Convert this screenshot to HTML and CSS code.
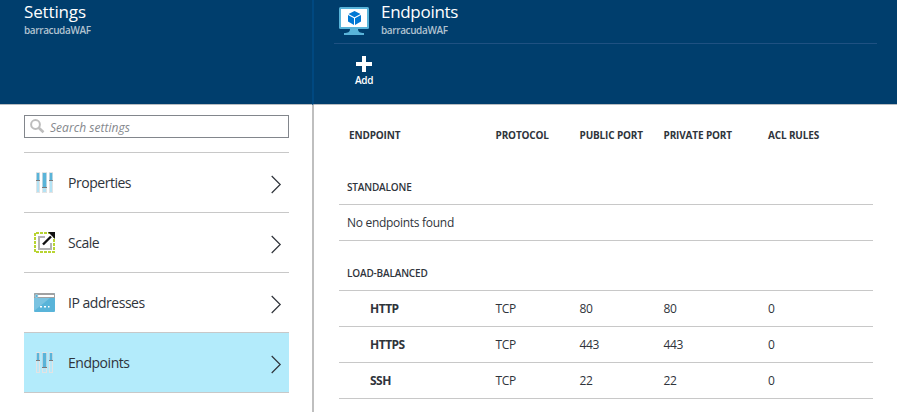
FILE: index.html
```html
<!DOCTYPE html>
<html lang="en">
<head>
<meta charset="utf-8">
<title>Endpoints</title>
<link rel="stylesheet" href="styles.css">
</head>
<body>
<svg class="defs" width="0" height="0" aria-hidden="true">
  <symbol id="sliders" viewBox="0 0 18 22">
    <path fill="#e3e3e3" d="M0 0h4v21H0zM6 0h5v21H6zM13 0h4v21h-4z"/>
    <path class="tube" d="M1 9h2v11H1zM7 16h3v4H7zM14 9h2v11h-2z"/>
    <path fill="#59b4d9" d="M.7 1h2.600v7H.7zM6.700 1h3.600v14H6.700zM13.700 1h2.600v7h-2.600z"/>
    <path fill="#7a7a7a" d="M0 8h4v1H0zM6 15h5v1H6zM13 8h4v1h-4z"/>
  </symbol>
  <symbol id="chevron" viewBox="0 0 11 19">
    <path fill="none" stroke="#2f343b" stroke-width="1.2" d="M.7 1L9.200 9.500.7 18"/>
  </symbol>
</svg>
<div class="app">
  <section class="settings">
    <header class="head">
      <h1 class="title">Settings</h1>
      <p class="sub">barracudaWAF</p>
    </header>
    <div class="content">
      <div class="search">
        <svg width="15" height="15" viewBox="0 0 15 15"><circle cx="5.5" cy="5.5" r="4.4" fill="none" stroke="#bdbdbd" stroke-width="2"/><path d="M8.7 8.7l4.8 4.6" stroke="#bdbdbd" stroke-width="2.6"/></svg>
        <span>Search settings</span>
      </div>
      <nav class="menu">
        <a class="item"><svg class="ico sliders" width="18" height="22"><use href="#sliders"/></svg><span>Properties</span><svg class="chev" width="11" height="19"><use href="#chevron"/></svg></a>
        <a class="item"><svg class="ico" width="22" height="22" viewBox="0 0 22 22"><rect x="1" y="1" width="19" height="19" fill="none" stroke="#b8d432" stroke-width="2" stroke-dasharray="3 1" stroke-dashoffset="-1"/><path d="M11 5H5v12h12v-6" fill="none" stroke="#b3b3b3" stroke-width="2"/><path d="M9 12.500L17 4.500" stroke="#111" stroke-width="2.400"/><path fill="#111" d="M14 0h7v7z"/></svg><span>Scale</span><svg class="chev" width="11" height="19"><use href="#chevron"/></svg></a>
        <a class="item"><svg class="ico ip" width="21" height="19" viewBox="0 0 21 19"><rect width="21" height="19" rx="1" fill="#59b4d9"/><path d="M1 0h19l1 1v4H0V1z" fill="#a0a1a2"/><path d="M0 5h16L0 18z" fill="#7ac3e1"/><path d="M4 2h16v2H4z" fill="#fff"/><circle cx="2.500" cy="3" r="1.500" fill="#59b4d9" stroke="#b8e3f3" stroke-width=".6"/><path d="M6 13h2v1.500H6zM10 13h2v1.500h-2zM14 13h1.500v1.500H14z" fill="#fff"/></svg><span>IP addresses</span><svg class="chev" width="11" height="19"><use href="#chevron"/></svg></a>
        <a class="item active"><svg class="ico sliders" width="18" height="22"><use href="#sliders"/></svg><span>Endpoints</span><svg class="chev" width="11" height="19"><use href="#chevron"/></svg></a>
      </nav>
    </div>
  </section>
  <section class="endpoints">
    <header class="head">
      <div class="heading">
        <svg class="monitor" width="30" height="28" viewBox="0 0 30 28"><rect width="30" height="22" rx="1.500" fill="#59b4d9"/><path fill="#fff" d="M2 2h26v18H2z"/><path fill="#59b4d9" d="M11 22h8c0 3 2 4 6 4v2H5v-2c4 0 6-1 6-4z"/><path fill="#0078d4" d="M15.500 4l6 3-6 3.300-6-3.300zM9 8l6 3.300V18l-6-3.500zM22 8l-6 3.300V18l6-3.500z"/></svg>
        <div><h1 class="title">Endpoints</h1><p class="sub">barracudaWAF</p></div>
      </div>
      <button class="add"><svg width="16" height="16" viewBox="0 0 16 16"><path fill="#fff" d="M6 0h4v6h6v4h-6v6H6v-6H0V6h6z"/></svg><span>Add</span></button>
    </header>
    <div class="content">
      <div class="row cols"><span class="c-end">ENDPOINT</span><span>PROTOCOL</span><span>PUBLIC PORT</span><span>PRIVATE PORT</span><span>ACL RULES</span></div>
      <h2 class="group"><span>STANDALONE</span></h2>
      <div class="empty"><span>No endpoints found</span></div>
      <h2 class="group g-load"><span>LOAD-BALANCED</span></h2>
      <div class="row data"><b>HTTP</b><span>TCP</span><span>80</span><span>80</span><span>0</span></div>
      <div class="row data"><b>HTTPS</b><span>TCP</span><span>443</span><span>443</span><span>0</span></div>
      <div class="row data"><b>SSH</b><span>TCP</span><span>22</span><span>22</span><span>0</span></div>
    </div>
  </section>
</div>
</body>
</html>
```
FILE: styles.css
```css
* { box-sizing: border-box; }
body { margin: 0; background: #fff; color: #2f343b; font-family: "Open Sans", "Noto Sans", sans-serif; }
h1, h2, p { margin: 0; font-weight: 400; }
.defs { display: block; height: 0; }
.app { display: grid; grid-template-columns: 312px 1fr; height: 412px; overflow: hidden; white-space: nowrap; }
.head { height: 105px; background: #003e6d; border-bottom: 1px solid #b8bcc0; color: #fff; }
.settings .head { padding-left: 24px; }
.title { font-size: 17px; line-height: 24px; height: 23px; letter-spacing: -0.3px; }
.settings .title { letter-spacing: -0.15px; }
.sub { font-size: 10px; line-height: 14px; font-weight: 600; color: #b0c2d0; letter-spacing: -0.38px; }
.settings .content { padding: 10px 23px 0 24px; }
.search { display: flex; gap: 5px; height: 23px; padding: 3px 5px; border: 1px solid #82868c; color: #85888d; font-size: 12px; font-style: italic; line-height: 18px; letter-spacing: 0.03px; }
.menu { margin-top: 14px; border-top: 1px solid #c8c8c8; }
.item { display: grid; grid-template-columns: 34px 1fr 11px; padding: 0 7px 0 10px; height: 60px; align-items: start; border-bottom: 1px solid #c8c8c8; font-size: 14px; letter-spacing: -0.47px; }
.item.active { background: #b3ebfb; }
.item > span { line-height: 60px; }
.ico { margin-top: 19px; }
.ico.ip { margin-top: 20px; }
.chev { margin-top: 22px; }
.sliders { --tube: #b3e3f5; margin-left: 2px; }
.tube { fill: var(--tube); }
.active .sliders { --tube: #b9e8f8; }
.endpoints { border-left: 2px solid #bfbfbf; }
.endpoints .head { margin-left: -2px; border-left: 2px solid #004880; padding-left: 20px; }
.heading { display: flex; gap: 12px; height: 44px; padding-left: 5px; margin-right: 20px; border-bottom: 1px solid #1f5182; }
.monitor { margin-top: 7px; }
.add { display: flex; flex-direction: column; align-items: center; width: 30px; margin: 12px 0 0 15px; padding: 0; border: 0; background: none; color: #fff; font: 600 10px/14px "Open Sans", sans-serif; letter-spacing: -0.3px; }
.add span { margin-top: 1px; }
.endpoints .content { margin: 0 24px 0 25px; }
.row { display: grid; grid-template-columns: 156.500px 84px 84px 104.500px 1fr; }
.cols { height: 60px; line-height: 60px; font-size: 10px; font-weight: 700; letter-spacing: -0.15px; }
.c-end { padding-left: 10px; }
.group { padding: 14px 8px 0; height: 40px; border-bottom: 1px solid #c8c8c8; font-size: 10px; line-height: 16px; font-weight: 600; letter-spacing: -0.17px; }
.g-load { height: 50px; padding-top: 24px; }
.empty { height: 36px; padding: 0 8px; border-bottom: 1px solid #c8c8c8; font-size: 12px; line-height: 36px; letter-spacing: -0.29px; }
.data { height: 36px; border-bottom: 1px solid #c8c8c8; font-size: 12px; line-height: 35px; letter-spacing: -0.35px; }
.data b { padding-left: 31px; font-weight: 700; letter-spacing: -0.5px; }
```
